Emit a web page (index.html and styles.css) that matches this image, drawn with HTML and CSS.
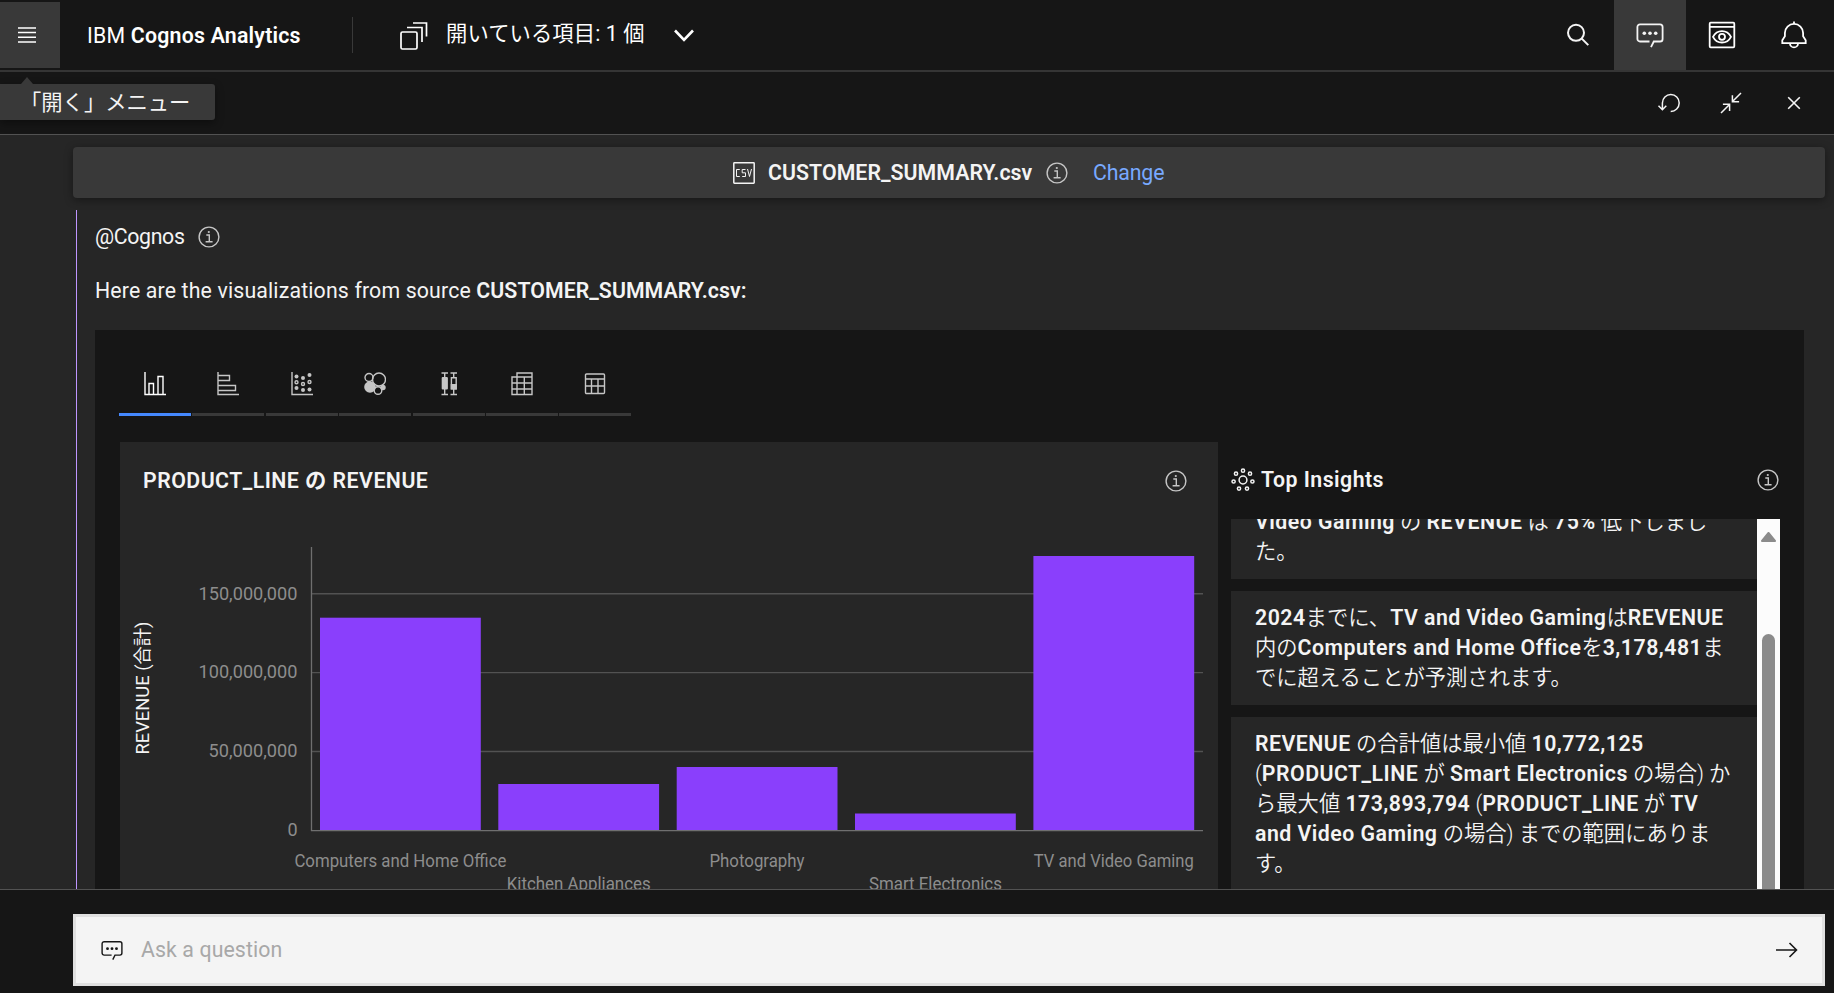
FILE: index.html
```html
<!DOCTYPE html>
<html lang="ja">
<head>
    <meta charset="UTF-8">
    <meta name="viewport" content="width=device-width, initial-scale=1.0">
    <title>IBM Cognos Analytics</title>
    <link rel="stylesheet" href="styles.css">
</head>
<body>

<!-- shared icons -->
<svg class="sprite" width="0" height="0">
    <symbol id="info" viewBox="0 0 22 22">
        <circle cx="11" cy="11" r="9.9" fill="none" stroke="currentColor" stroke-width="1.4"/>
        <circle cx="10.8" cy="6" r="1.1" fill="currentColor"/>
        <path d="M8.3 9h3v6.6M7.6 15.8h7" fill="none" stroke="currentColor" stroke-width="1.4"/>
    </symbol>
    <symbol id="chat" viewBox="0 0 28 28">
        <path d="M13.5 20.5H4a2.6 2.6 0 0 1-2.6-2.6V6A2.6 2.6 0 0 1 4 3.4h20A2.6 2.6 0 0 1 26.6 6v11.9a2.6 2.6 0 0 1-2.6 2.6h-6.2L15 26.2" fill="none" stroke="currentColor" stroke-width="1.8"/>
        <g fill="currentColor"><circle cx="8.3" cy="12.3" r="1.8"/><circle cx="14" cy="12.3" r="1.8"/><circle cx="19.7" cy="12.3" r="1.8"/></g>
    </symbol>
</svg>

<header class="header">
    <button class="menu-button" aria-label="メニュー">
        <svg width="18" height="16" viewBox="0 0 18 16"><path d="M0 1h18M0 5.5h18M0 10.3h18M0 15h18" stroke="#fff" stroke-width="1.4"/></svg>
    </button>
    <div class="brand">IBM <b>Cognos Analytics</b></div>
    <div class="divider"></div>
    <div class="open-items">
        <svg width="28" height="28" viewBox="0 0 28 28" fill="none" stroke="#fff" stroke-width="1.7">
            <rect x="1" y="10" width="16" height="17" rx="1.5"/>
            <path d="M7 5.5h15V20M13 1h13.5v13.5"/>
        </svg>
        <span class="open-label">開いている項目: 1 個</span>
        <svg class="chevron" width="20" height="13" viewBox="0 0 20 13"><path d="M1 1.5l9 9.3 9-9.3" fill="none" stroke="#fff" stroke-width="2.6"/></svg>
    </div>
    <div class="header-actions">
        <div class="action">
            <svg width="24" height="24" viewBox="0 0 24 24" fill="none" stroke="#f4f4f4" stroke-width="2"><circle cx="10" cy="9.8" r="8"/><path d="M15.8 15.6l6.5 6.5"/></svg>
        </div>
        <div class="action active">
            <svg width="28" height="28"><use href="#chat"/></svg>
        </div>
        <div class="action">
            <svg width="28" height="28" viewBox="0 0 28 28" fill="none" stroke="#fff" stroke-width="1.8">
                <rect x="1.7" y="1.7" width="24.6" height="24.6" rx="1"/>
                <path d="M1.7 5.8h24.6M5 15.8c2-3.8 5.2-5.6 9-5.6s7 1.8 9 5.6c-2 3.8-5.2 5.7-9 5.7s-7-1.9-9-5.7z"/>
                <circle cx="14" cy="15.8" r="3"/>
            </svg>
        </div>
        <div class="action">
            <svg width="28" height="28" viewBox="0 0 28 28" fill="none" stroke="#fff" stroke-width="1.8">
                <path d="M14 .5v3M2.3 22.2v-3l2.6-4V12a9.1 9.1 0 0 1 18.2 0v3.2l2.6 4v3zM10 22.4a4 4 0 0 0 8 0"/>
            </svg>
        </div>
    </div>
</header>

<div class="toolbar">
    <div class="tooltip">「開く」メニュー</div>
    <div class="toolbar-actions">
        <svg width="24" height="20" viewBox="0 0 24 20" fill="none" stroke="#f4f4f4" stroke-width="1.5"><path d="M1.5 12.8l3.9 4 3.9-4M5.4 16.5V10a8.4 8.4 0 1 1 8.3 8.4"/></svg>
        <svg width="22" height="22" viewBox="0 0 22 22" fill="none" stroke="#f4f4f4" stroke-width="1.5"><path d="M21 1l-8.5 8.5M12.4 3.3v6.5h6.7M1 21l8.5-8.5M2.9 12.2h6.7v6.7"/></svg>
        <svg width="14" height="14" viewBox="0 0 14 14" fill="none" stroke="#f4f4f4" stroke-width="1.6"><path d="M1.2 1.2l11.6 11.6M12.8 1.2L1.2 12.8"/></svg>
    </div>
</div>

<main class="content">
    <div class="source-bar">
        <svg width="22" height="22" viewBox="0 0 22 22" fill="none" stroke="#f4f4f4">
            <rect x=".8" y=".8" width="20.4" height="20.4" rx=".6" stroke-width="1.5"/>
            <path d="M6.8 7.5H3.5v7h3.3M12.5 7.5H9.2v3.3h3.3v3.7H9.2M14.5 7l2 7.5 2-7.5" stroke-width="1"/>
        </svg>
        <b class="source-name">CUSTOMER_SUMMARY.csv</b>
        <svg class="info" width="22" height="22"><use href="#info"/></svg>
        <a class="change">Change</a>
    </div>

    <section class="message">
        <div class="sender">
            <span>@Cognos</span>
            <svg class="info" width="22" height="22"><use href="#info"/></svg>
        </div>
        <p class="answer">Here are the visualizations from source <b>CUSTOMER_SUMMARY.csv:</b></p>

        <div class="panel">
            <div class="tabs">
                <div class="tab selected">
                    <svg width="22" height="24" viewBox="0 0 22 24"><path d="M1 0v22.5h21M5 22V11.5h4.500V22M14 22V4.500h5V22"/></svg>
                </div>
                <div class="tab">
                    <svg width="22" height="24" viewBox="0 0 22 24"><path d="M1 0v22.5h21M1 3.5h11.5v5H1M1 13.5h17.5v5H1"/></svg>
                </div>
                <div class="tab">
                    <svg width="22" height="24" viewBox="0 0 22 24">
                        <path d="M1 0v22.5h21"/>
                        <g class="dots"><circle cx="5.5" cy="4.5" r="2"/><circle cx="12" cy="6" r="2"/><circle cx="18.5" cy="3" r="2"/><circle cx="5.5" cy="16" r="2"/><circle cx="12" cy="18" r="2"/><circle cx="18.5" cy="17.5" r="2"/></g>
                        <circle cx="5.5" cy="10.2" r="1.5"/><circle cx="12" cy="12" r="1.5"/><circle cx="18.5" cy="10" r="1.5"/>
                    </svg>
                </div>
                <div class="tab">
                    <svg width="22" height="24" viewBox="0 0 22 24">
                        <circle cx="5" cy="5.5" r="4"/><circle cx="15" cy="7.5" r="6.5"/><circle cx="14" cy="18.5" r="3.8"/>
                        <g class="dots"><circle cx="6" cy="15" r="5.8"/><circle cx="19" cy="15.5" r="2.7"/></g>
                    </svg>
                </div>
                <div class="tab">
                    <svg width="22" height="24" viewBox="0 0 22 24">
                        <path d="M3.500 1h6.500M6.700 1v21.500M3.500 22.500h6.500M12.500 1h6.500M15.700 1v4M15.700 17v5.500M12.500 22.500h6.500M13.400 5.700h4.800v11h-4.800z"/>
                        <g class="dots"><rect x="3.700" y="5" width="6.200" height="12.500" rx="1"/><rect x="12.700" y="12" width="6.200" height="5.500"/></g>
                    </svg>
                </div>
                <div class="tab">
                    <svg width="22" height="24" viewBox="0 0 22 24"><path d="M6 5V1h15v21.500H1V5h20M1 11h20M1 17h20M6 5v17.500M13.300 5v17.500"/></svg>
                </div>
                <div class="tab">
                    <svg width="22" height="24" viewBox="0 0 22 24"><rect x="1.500" y="2" width="19" height="19.500" rx="1"/><path d="M1.500 7h19M1.500 14h19M7.500 7v14.500M14 7v14.500"/></svg>
                </div>
            </div>

            <div class="columns">
                <div class="chart-card">
                    <div class="chart-head">
                        <h2>PRODUCT_LINE の REVENUE</h2>
                        <svg class="info" width="22" height="22"><use href="#info"/></svg>
                    </div>
                    <!-- bar chart -->
                    <svg class="chart" width="1098" height="380" viewBox="0 0 1098 380">
                        <g class="grid">
                            <path d="M191 73.7h892M191 152.6h892M191 231.5h892"/>
                        </g>
                        <g class="bars">
                            <rect x="200" y="97.7" width="160.8" height="213"/>
                            <rect x="378.3" y="264" width="160.8" height="46.7"/>
                            <rect x="556.7" y="247" width="160.8" height="63.7"/>
                            <rect x="735" y="293.5" width="160.8" height="17.2"/>
                            <rect x="913.4" y="36" width="160.8" height="274.7"/>
                        </g>
                        <path class="axis" d="M191.5 27v284M191 310.7h892"/>
                        <g class="y-labels">
                            <text x="177.5" y="79.5" textLength="99" lengthAdjust="spacingAndGlyphs">150,000,000</text>
                            <text x="177.5" y="157.5" textLength="99" lengthAdjust="spacingAndGlyphs">100,000,000</text>
                            <text x="177.5" y="236.5" textLength="89" lengthAdjust="spacingAndGlyphs">50,000,000</text>
                            <text x="177.5" y="315.5">0</text>
                        </g>
                        <g class="x-labels">
                            <text x="280.4" y="346.5" textLength="212" lengthAdjust="spacingAndGlyphs">Computers and Home Office</text>
                            <text x="458.7" y="369.5" textLength="144" lengthAdjust="spacingAndGlyphs">Kitchen Appliances</text>
                            <text x="637" y="346.5" textLength="95" lengthAdjust="spacingAndGlyphs">Photography</text>
                            <text x="815.4" y="369.5" textLength="133" lengthAdjust="spacingAndGlyphs">Smart Electronics</text>
                            <text x="993.8" y="346.5" textLength="160" lengthAdjust="spacingAndGlyphs">TV and Video Gaming</text>
                        </g>
                        <text class="axis-title" transform="translate(29 168) rotate(-90)" textLength="133" lengthAdjust="spacingAndGlyphs">REVENUE (合計)</text>
                    </svg>
                </div>

                <aside class="insights">
                    <div class="insights-head">
                        <svg width="24" height="24" viewBox="0 0 24 24" fill="none" stroke="#f4f4f4" stroke-width="1.5">
                            <circle cx="12" cy="12" r="3.9"/>
                            <circle cx="12" cy="2.7" r="1.6"/><circle cx="5" cy="5.7" r="1.6"/><circle cx="19" cy="5.7" r="1.6"/>
                            <circle cx="2.6" cy="13.5" r="1.6"/><circle cx="21.4" cy="13.5" r="1.6"/>
                            <circle cx="8" cy="20.6" r="1.6"/><circle cx="16" cy="20.6" r="1.6"/>
                        </svg>
                        <h2>Top Insights</h2>
                        <svg class="info" width="22" height="22"><use href="#info"/></svg>
                    </div>
                    <div class="insights-body">
                        <div class="insights-list">
                            <div class="insight clipped"><b>Video Gaming</b> の <b>REVENUE</b> は <b>75%</b> 低下しまし<br>た。</div>
                            <div class="insight"><b>2024</b>までに、<b>TV and Video Gaming</b>は<b>REVENUE</b><br>内の<b>Computers and Home Office</b>を<b>3,178,481</b>ま<br>でに超えることが予測されます。</div>
                            <div class="insight"><b>REVENUE</b> の合計値は最小値 <b>10,772,125</b><br>(<b>PRODUCT_LINE</b> が <b>Smart Electronics</b> の場合) か<br>ら最大値 <b>173,893,794</b> (<b>PRODUCT_LINE</b> が <b>TV</b><br><b>and Video Gaming</b> の場合) までの範囲にありま<br>す。</div>
                        </div>
                        <div class="scrollbar">
                            <svg width="15" height="10" viewBox="0 0 15 10"><path d="M7.5 1L14 9H1z" fill="#8b8b8b" stroke="#8b8b8b" stroke-width="2" stroke-linejoin="round"/></svg>
                            <div class="thumb"></div>
                        </div>
                    </div>
                </aside>
            </div>
        </div>
    </section>
</main>

<footer class="footer">
    <div class="ask">
        <svg width="22" height="22"><use href="#chat"/></svg>
        <span class="placeholder">Ask a question</span>
        <svg width="22" height="16" viewBox="0 0 22 16" fill="none" stroke="#161616" stroke-width="1.6"><path d="M0 8h20.5M13.5 1l7 7-7 7"/></svg>
    </div>
</footer>

</body>
</html>
```
FILE: styles.css
```css
* {
    box-sizing: border-box;
}
body {
    margin: 0;
    height: 993px;
    display: flex;
    flex-direction: column;
    overflow: hidden;
    background-color: #161616;
    color: #f4f4f4;
    font-family: Roboto, 'Noto Sans CJK JP', sans-serif;
    font-size: 21.3px;
    line-height: 30px;
}
svg {
    display: block;
    flex: none;
}
b, h2 {
    font-weight: 600;
}
.sprite {
    position: absolute;
}
.info {
    color: #c6c6c6;
}

/* header */
.header {
    display: flex;
    align-items: center;
    flex: none;
    height: 72px;
    border-bottom: 2px solid #353535;
    white-space: nowrap;
}
.menu-button {
    width: 60px;
    height: 66px;
    padding: 0 0 0 18px;
    border: none;
    background-color: #393939;
}
.brand {
    width: 292px;
    padding: 2px 0 0 27px;
    color: #fff;
    letter-spacing: 0.22px;
}
.divider {
    width: 1px;
    height: 36px;
    background-color: #393939;
}
.open-items {
    display: flex;
    align-items: center;
    padding-left: 47px;
    color: #fff;
}
.open-items > svg:first-child {
    margin-top: 2px;
}
.open-label {
    width: 200px;
    margin: -2px 28px 0 18px;
    letter-spacing: 0.1px;
}
.header-actions {
    display: flex;
    margin-left: auto;
    padding-right: 4px;
}
.action {
    display: flex;
    align-items: center;
    justify-content: center;
    width: 72px;
    height: 70px;
}
.action.active {
    background-color: #393939;
}

/* toolbar */
.toolbar {
    display: flex;
    flex: none;
    height: 63px;
    border-bottom: 1px solid #525252;
}
.tooltip {
    position: relative;
    width: 215px;
    height: 36px;
    margin-top: 12px;
    padding-left: 20px;
    line-height: 37px;
    background-color: #393939;
    border-radius: 0 3px 3px 0;
    box-shadow: 0 3px 8px rgba(0, 0, 0, 0.4);
    white-space: nowrap;
}
.tooltip::before {
    content: '';
    position: absolute;
    left: 21px;
    top: -7px;
    border: 6px solid transparent;
    border-top: none;
    border-bottom: 7px solid #393939;
}
.toolbar-actions {
    display: flex;
    align-items: center;
    gap: 39px;
    margin-left: auto;
    padding-right: 33px;
}
.toolbar-actions svg:last-child {
    margin-left: 6px;
}

/* content */
.content {
    flex: 1;
    min-height: 0;
    overflow: hidden;
    padding: 12px 9px 0 73px;
    background-color: #262626;
}
.source-bar {
    display: flex;
    align-items: center;
    height: 51px;
    padding-left: 660px;
    background-color: #393939;
    border-radius: 4px;
    box-shadow: 0 2px 8px rgba(0, 0, 0, 0.4);
}
.source-name {
    width: 265px;
    margin: 0 13px;
    letter-spacing: 0.05px;
}
.change {
    margin-left: 25px;
    color: #78a9ff;
    letter-spacing: -0.15px;
}
.message {
    height: 680px;
    margin: 12px 21px 0 3px;
    padding: 12px 0 0 18px;
    border-left: 1px solid #be95ff;
}
.sender {
    display: flex;
    align-items: center;
    height: 30px;
}
.sender span {
    width: 103px;
    letter-spacing: -0.35px;
}
.answer {
    margin: 24px 0;
    letter-spacing: 0.15px;
}
.answer b {
    letter-spacing: 0.05px;
}
.panel {
    height: 600px;
    padding: 24px 24px 0 24px;
    background-color: #161616;
}
.tabs {
    display: flex;
    gap: 1.4px;
}
.tab {
    display: flex;
    justify-content: center;
    width: 72px;
    height: 62px;
    padding-top: 18px;
    border-bottom: 3px solid #393939;
}
.tab.selected {
    border-color: #4589ff;
}
.tab svg {
    fill: none;
    stroke: #c6c6c6;
    stroke-width: 1.4;
}
.tab.selected svg {
    stroke: #fff;
}
.tab .dots {
    fill: #c6c6c6;
    stroke: none;
}
.columns {
    display: flex;
    gap: 13px;
    margin-top: 26px;
    padding-left: 1px;
}
h2 {
    margin: 0;
    font-size: 21.3px;
    line-height: 30px;
    letter-spacing: 0.47px;
}

/* chart */
.chart-card {
    width: 1098px;
    height: 500px;
    background-color: #262626;
}
.chart-head {
    display: flex;
    align-items: center;
    justify-content: space-between;
    height: 78px;
    padding: 0 31px 0 23px;
}
.grid path {
    stroke: #525252;
    stroke-width: 1.4;
}
.axis {
    fill: none;
    stroke: #6f6f6f;
    stroke-width: 1.3;
}
.bars {
    fill: #8a3ffc;
}
.y-labels, .x-labels {
    fill: #8d8d8d;
    font-size: 18px;
}
.y-labels {
    text-anchor: end;
}
.x-labels, .axis-title {
    text-anchor: middle;
}
.axis-title {
    fill: #f4f4f4;
    font-size: 18px;
}

/* insights */
.insights {
    width: 549px;
}
.insights-head {
    display: flex;
    align-items: center;
    gap: 6px;
    height: 77px;
    padding-bottom: 2px;
}
.insights-head .info {
    margin-left: auto;
    margin-right: 1px;
}
.insights-body {
    display: flex;
    height: 380px;
    overflow: hidden;
}
.insights-list {
    width: 526px;
}
.insight {
    margin-bottom: 12px;
    padding: 12px 0 12px 24px;
    background-color: #262626;
    font-weight: 350;
    white-space: nowrap;
}
.insight b {
    letter-spacing: 0.48px;
}
.insight.clipped {
    margin-top: -24px;
}
.scrollbar {
    display: flex;
    flex-direction: column;
    align-items: center;
    width: 23px;
    padding-top: 13px;
    background-color: #fcfcfc;
}
.thumb {
    width: 13px;
    height: 400px;
    flex: none;
    margin-top: 92px;
    border-radius: 7px;
    background-color: #8b8b8b;
}

/* question box */
.footer {
    flex: none;
    height: 104px;
    padding: 24px 9px 0 73px;
    border-top: 1px solid #525252;
}
.ask {
    display: flex;
    align-items: center;
    height: 72px;
    padding: 0 24px 1px 25px;
    border: 3px solid #e0e0e0;
    background-color: #f4f4f4;
    color: #161616;
}
.placeholder {
    flex: 1;
    margin-left: 18px;
    color: #a8a8a8;
    letter-spacing: 0.1px;
}
```
